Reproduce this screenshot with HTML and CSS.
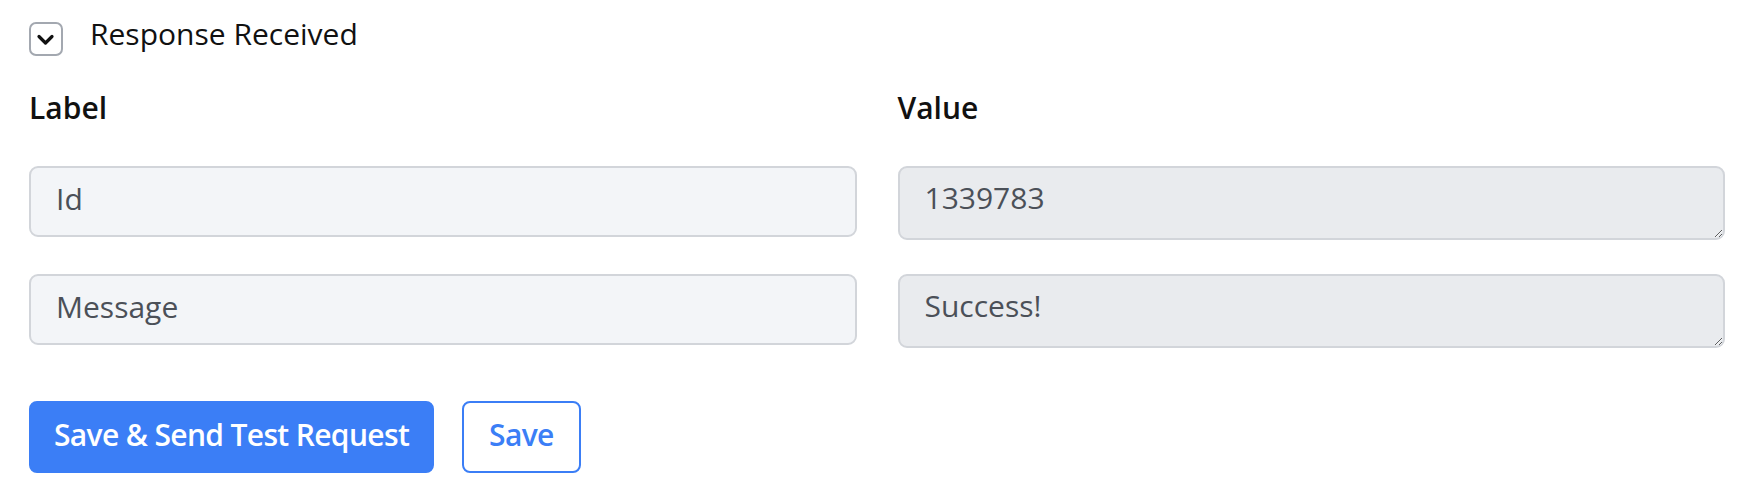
FILE: index.html
```html
<!DOCTYPE html>
<html lang="en">
<head>
<meta charset="utf-8">
<title>Response Received</title>
<link rel="stylesheet" href="styles.css">
</head>
<body>
<div class="panel">
  <div class="header">
    <button class="toggle" type="button" aria-label="Collapse">
      <svg width="34" height="34" viewBox="0 0 34 34"><path d="M10 14.5 L16.5 21 L23 14.5" fill="none" stroke="#111" stroke-width="3.2" stroke-linecap="round" stroke-linejoin="round"/></svg>
    </button>
    <span class="title">Response Received</span>
  </div>

  <div class="fields">
    <div class="col-head">Label</div>
    <div class="col-head">Value</div>
    <input class="field" type="text" value="Id" readonly>
    <textarea class="value" readonly>1339783</textarea>
    <input class="field" type="text" value="Message" readonly>
    <textarea class="value" readonly>Success!</textarea>
  </div>

  <div class="actions">
    <button class="btn btn-primary" type="button">Save &amp; Send Test Request</button>
    <button class="btn btn-outline" type="button">Save</button>
  </div>
</div>
</body>
</html>
```
FILE: styles.css
```css
* { box-sizing: border-box; }

body {
  margin: 0;
  background: #ffffff;
  font-family: "Open Sans", "Liberation Sans", sans-serif;
  color: #111;
}

.panel {
  padding: 16px 39px 0 29px;
}

.header {
  display: flex;
  align-items: flex-start;
  gap: 27px;
}

.toggle {
  margin-top: 6px;
  width: 34px;
  height: 34px;
  padding: 0;
  border: 2px solid #a3a8b0;
  border-radius: 7px;
  background: #fff;
  display: flex;
  align-items: center;
  justify-content: center;
}

.toggle svg { display: block; margin: -2px; }

.title {
  font-size: 30px;
  line-height: 36px;
  color: #111;
}

.fields {
  margin-top: 34px;
  display: grid;
  grid-template-columns: 1fr 1fr;
  column-gap: 41px;
  row-gap: 34px;
  align-items: start;
}

.col-head {
  font-size: 30px;
  line-height: 36px;
  font-weight: 600;
  color: #111;
  margin-bottom: 6px;
}

.field,
.value {
  display: block;
  width: 100%;
  margin: 0;
  font-family: inherit;
  font-size: 30px;
  color: #4b5058;
  border: 2px solid #d2d5da;
  border-radius: 9px;
  outline: none;
}

.field {
  height: 71px;
  padding: 0 23px 6px 25px;
  background: #f3f5f8;
}

.value {
  height: 74px;
  padding: 10px 24px 0 25px;
  line-height: 40px;
  background: #e9ebee;
  resize: vertical;
  overflow: hidden;
}

.actions {
  margin-top: 53px;
  display: flex;
  gap: 28px;
}

.btn {
  height: 72px;
  font-family: inherit;
  font-size: 30px;
  font-weight: 600;
  letter-spacing: -0.65px;
  border-radius: 8px;
  padding: 0 23px 6px 23px;
  cursor: pointer;
}

.btn-primary {
  background: #3b7ef6;
  border: 2px solid #3b7ef6;
  color: #fff;
}

.btn-outline {
  background: #fff;
  border: 2px solid #3b7ef6;
  color: #3b7ef6;
  padding-left: 25px;
  padding-right: 25px;
}
```
